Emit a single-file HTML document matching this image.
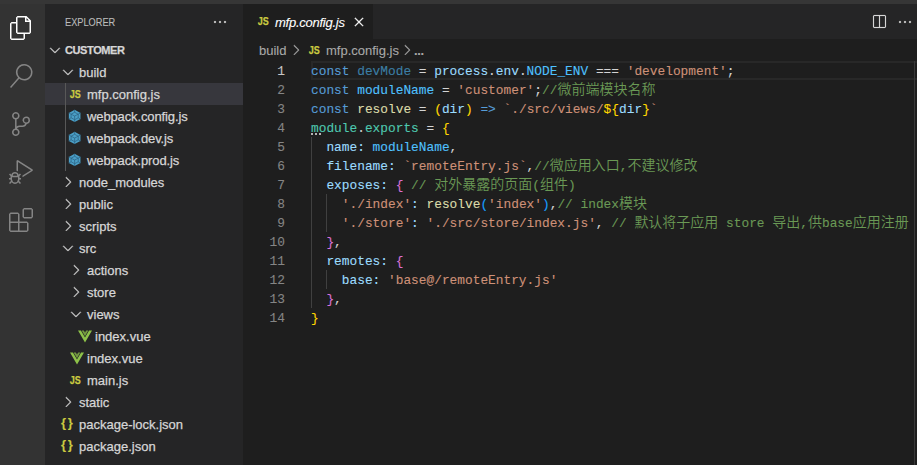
<!DOCTYPE html>
<html lang="en">
<head>
<meta charset="utf-8">
<title>mfp.config.js - customer</title>
<style>
*{box-sizing:border-box;margin:0;padding:0}
html,body{width:917px;height:465px;overflow:hidden;background:#1e1e1e}
body{-webkit-text-stroke-width:0.1px;position:relative;font-family:"Liberation Sans","Noto Sans CJK SC",sans-serif;font-size:13px;color:#cccccc}
.abs{position:absolute}
#topstrip{left:0;top:0;width:917px;height:4px;background:#363636}
#activity{left:0;top:4px;width:45px;height:461px;background:#333333}
#activity svg{position:absolute;left:9px}
#sidebar{left:45px;top:4px;width:198px;height:461px;background:#252526}
#tabs{left:243px;top:4px;width:674px;height:35px;background:#252526}
#tab{left:0;top:0;width:130px;height:35px;background:#1e1e1e}
#editor{left:243px;top:39px;width:674px;height:426px;background:#1e1e1e}
.row{position:absolute;left:0;width:198px;height:22px;line-height:22px;white-space:nowrap}
.row .lbl{position:absolute;top:1px;color:#d6d6d6;-webkit-text-stroke:0.25px #d6d6d6}
.row .hdr{font-weight:bold;font-size:11px;letter-spacing:-0.4px;top:0}
.ic{position:absolute}
.sel{background:#37373d}
.js{position:absolute;top:0;height:22px;line-height:22px;font-weight:bold;font-size:9px;color:#cbcb41;letter-spacing:0;transform-origin:0 50%;transform:scaleY(1.25);-webkit-text-stroke:0.2px #cbcb41;margin-left:-0.3px}
.json{position:absolute;top:-1px;height:22px;line-height:22px;font-weight:bold;font-size:13px;color:#cbcb41;letter-spacing:1.6px}
.guide{position:absolute;width:1px;background:#585858}
.ln{position:absolute;left:0;width:42px;text-align:right;height:19px;line-height:21px;color:#858585;font-family:"Liberation Mono",monospace;font-size:12.83px}
.ln.cur{color:#c6c6c6}
.cl{position:absolute;left:68px;height:19px;line-height:21px;white-space:pre;font-family:"Liberation Mono","Noto Sans CJK SC",monospace;font-size:12.83px;color:#d4d4d4}
.cl i{-webkit-text-stroke-width:0;font-style:normal;font-size:14px;line-height:0;font-weight:350;font-family:"Noto Sans CJK SC","WenQuanYi Zen Hei",sans-serif}
.k{color:#569cd6}.v{color:#9cdcfe}.c{color:#4fc1ff}.s{color:#ce9178}.m{color:#6a9955}.f{color:#dcdcaa}.t{color:#4ec9b0}
.b1{color:#ffd700}.b2{color:#da70d6}.b3{color:#179fff}.u{color:#3c7fa6}
.ig{position:absolute;width:1px;background:#404040}
.bc{position:absolute;top:1px;height:22px;line-height:22px;color:#a9a9a9;white-space:nowrap}
</style>
</head>
<body>
<div id="topstrip" class="abs"></div>
<div id="activity" class="abs">
  <svg style="top:12px" width="24" height="24" viewBox="0 0 24 24"><path fill="#ffffff" d="M17.5 0h-9L7 1.5V6H2.5L1 7.5v15.07L2.5 24h12.07L16 22.57V18h4.7l1.3-1.43V4.5L17.5 0zm0 2.12l2.38 2.38H17.5V2.12zm-3 20.38h-12v-15H7v9.07L8.5 18h6v4.5zm6-6h-12v-15H16V6h4.5v10.5z"/></svg>
  <svg style="top:60px" width="24" height="24" viewBox="0 0 24 24"><path fill="#858585" d="M15.25 0a8.25 8.25 0 0 0-6.18 13.72L1 22.88l1.12 1 8.05-9.12A8.251 8.251 0 1 0 15.25.01V0zm0 15a6.75 6.75 0 1 1 0-13.5 6.75 6.75 0 0 1 0 13.5z"/></svg>
  <svg style="top:108px" width="24" height="24" viewBox="0 0 24 24"><path fill="#858585" d="M21.007 8.222A3.738 3.738 0 0 0 15.045 5.2a3.737 3.737 0 0 0 1.156 6.583 2.988 2.988 0 0 1-2.668 1.67h-2.99a4.456 4.456 0 0 0-2.989 1.165V7.4a3.737 3.737 0 1 0-1.494 0v9.117a3.776 3.776 0 1 0 1.816.099 2.99 2.99 0 0 1 2.668-1.667h2.99a4.484 4.484 0 0 0 4.223-3.039 3.736 3.736 0 0 0 3.25-3.687zM4.565 3.738a2.242 2.242 0 1 1 4.484 0 2.242 2.242 0 0 1-4.484 0zm4.484 16.441a2.242 2.242 0 1 1-4.484 0 2.242 2.242 0 0 1 4.484 0zm8.221-9.715a2.242 2.242 0 1 1 0-4.485 2.242 2.242 0 0 1 0 4.485z"/></svg>
  <svg style="top:156px" width="24" height="24" viewBox="0 0 24 24"><path fill="#858585" d="M10.94 13.5l-1.32 1.32a3.73 3.73 0 0 0-7.24 0L1.06 13.5 0 14.56l1.72 1.72-.22.22V18H0v1.5h1.5v.08c.077.489.214.966.41 1.42L0 22.94 1.06 24l1.65-1.65A4.308 4.308 0 0 0 6 24a4.31 4.31 0 0 0 3.29-1.65L10.94 24 12 22.94 10.09 21c.198-.464.336-.951.41-1.45v-.1H12V18h-1.5v-1.5l-.22-.22L12 14.56l-1.06-1.06zM6 13.5a2.25 2.25 0 0 1 2.25 2.25h-4.5A2.25 2.25 0 0 1 6 13.5zm3 6a3.33 3.33 0 0 1-3 3 3.33 3.33 0 0 1-3-3v-2.250h6v2.250zm14.760-9.900v1.260L13.500 17.370V15.600l8.500-5.370L9 2v9.460a5.070 5.070 0 0 0-1.500-.720V.630L8.640 0l15.120 9.600z"/></svg>
  <svg style="top:204px" width="24" height="24" viewBox="0 0 24 24"><path fill="#858585" d="M13.5 1.5L15 0h7.5L24 1.5V9l-1.5 1.5H15L13.500 9V1.500zm1.500 0V9h7.500V1.500H15zM0 15V6l1.500-1.500H9L10.500 6v7.500H18l1.500 1.500v7.500L18 24H1.500L0 22.500V15zm9-1.500V6H1.500v7.500H9zM9 15H1.500v7.500H9V15zm1.500 7.500H18V15h-7.500v7.500z"/></svg>
</div>
<div id="sidebar" class="abs">
  <div class="abs" style="left:20px;top:1px;height:35px;line-height:35px;font-size:11px;color:#bbbbbb;white-space:nowrap;transform-origin:0 50%;transform:scaleX(0.838)">EXPLORER</div>
  <svg class="ic" style="left:167px;top:10px" width="16" height="16" viewBox="0 0 16 16"><path fill="#dddddd" stroke="#dddddd" stroke-width="0.2" d="M4 8a1 1 0 1 1-2 0 1 1 0 0 1 2 0zm5 0a1 1 0 1 1-2 0 1 1 0 0 1 2 0zm5 0a1 1 0 1 1-2 0 1 1 0 0 1 2 0z"/></svg>
  <div class="row" style="top:35px"><svg class="ic" style="left:2px;top:3px" width="16" height="16" viewBox="0 0 16 16"><path fill="#d0d0d0" stroke="#d0d0d0" stroke-width="0.35" d="M7.976 10.072l4.357-4.357.62.618L8.284 11h-.618L3 6.333l.619-.618 4.357 4.357z"/></svg><span class="lbl hdr" style="left:20px">CUSTOMER</span></div>
  <div class="row" style="top:57px"><svg class="ic" style="left:15px;top:3px" width="16" height="16" viewBox="0 0 16 16"><path fill="#d0d0d0" stroke="#d0d0d0" stroke-width="0.35" d="M7.976 10.072l4.357-4.357.62.618L8.284 11h-.618L3 6.333l.619-.618 4.357 4.357z"/></svg><span class="lbl" style="left:34px">build</span></div>
  <div class="row sel" style="top:79px"><span class="js" style="left:25px">JS</span><span class="lbl" style="left:42px">mfp.config.js</span></div>
  <div class="row" style="top:101px"><svg class="ic" style="left:23px;top:4px" width="14" height="14" viewBox="0 0 14 14"><path fill="#4b9fc6" d="M6.65 0.85L12.45 3.9v6.1L6.65 12.95 0.85 10V3.9z"/><path fill="none" stroke="#2a5f80" stroke-width="0.7" d="M6.65 3.3L10.2 5.2v3.6L6.65 10.7 3.1 8.8V5.2zM6.65 7v3.7M6.65 7L3.1 5.2M6.65 7L10.2 5.2M6.65 0.7v2.6M6.65 13.1v-2.4M0.7 3.85L3.1 5.2M12.6 3.85L10.2 5.2M0.7 10.05L3.1 8.8M12.6 10.05L10.2 8.8"/></svg><span class="lbl" style="left:42px;letter-spacing:-0.12px">webpack.config.js</span></div>
  <div class="row" style="top:123px"><svg class="ic" style="left:23px;top:4px" width="14" height="14" viewBox="0 0 14 14"><path fill="#4b9fc6" d="M6.65 0.85L12.45 3.9v6.1L6.65 12.95 0.85 10V3.9z"/><path fill="none" stroke="#2a5f80" stroke-width="0.7" d="M6.65 3.3L10.2 5.2v3.6L6.65 10.7 3.1 8.8V5.2zM6.65 7v3.7M6.65 7L3.1 5.2M6.65 7L10.2 5.2M6.65 0.7v2.6M6.65 13.1v-2.4M0.7 3.85L3.1 5.2M12.6 3.85L10.2 5.2M0.7 10.05L3.1 8.8M12.6 10.05L10.2 8.8"/></svg><span class="lbl" style="left:42px;letter-spacing:-0.12px">webpack.dev.js</span></div>
  <div class="row" style="top:145px"><svg class="ic" style="left:23px;top:4px" width="14" height="14" viewBox="0 0 14 14"><path fill="#4b9fc6" d="M6.65 0.85L12.45 3.9v6.1L6.65 12.95 0.85 10V3.9z"/><path fill="none" stroke="#2a5f80" stroke-width="0.7" d="M6.65 3.3L10.2 5.2v3.6L6.65 10.7 3.1 8.8V5.2zM6.65 7v3.7M6.65 7L3.1 5.2M6.65 7L10.2 5.2M6.65 0.7v2.6M6.65 13.1v-2.4M0.7 3.85L3.1 5.2M12.6 3.85L10.2 5.2M0.7 10.05L3.1 8.8M12.6 10.05L10.2 8.8"/></svg><span class="lbl" style="left:42px;letter-spacing:-0.12px">webpack.prod.js</span></div>
  <div class="row" style="top:167px"><svg class="ic" style="left:15px;top:3px" width="16" height="16" viewBox="0 0 16 16"><path fill="#d0d0d0" stroke="#d0d0d0" stroke-width="0.35" d="M10.072 8.024L5.715 3.667l.618-.62L11 7.716v.618L6.333 13l-.618-.619 4.357-4.357z"/></svg><span class="lbl" style="left:34px">node_modules</span></div>
  <div class="row" style="top:189px"><svg class="ic" style="left:15px;top:3px" width="16" height="16" viewBox="0 0 16 16"><path fill="#d0d0d0" stroke="#d0d0d0" stroke-width="0.35" d="M10.072 8.024L5.715 3.667l.618-.62L11 7.716v.618L6.333 13l-.618-.619 4.357-4.357z"/></svg><span class="lbl" style="left:34px">public</span></div>
  <div class="row" style="top:211px"><svg class="ic" style="left:15px;top:3px" width="16" height="16" viewBox="0 0 16 16"><path fill="#d0d0d0" stroke="#d0d0d0" stroke-width="0.35" d="M10.072 8.024L5.715 3.667l.618-.62L11 7.716v.618L6.333 13l-.618-.619 4.357-4.357z"/></svg><span class="lbl" style="left:34px">scripts</span></div>
  <div class="row" style="top:233px"><svg class="ic" style="left:15px;top:3px" width="16" height="16" viewBox="0 0 16 16"><path fill="#d0d0d0" stroke="#d0d0d0" stroke-width="0.35" d="M7.976 10.072l4.357-4.357.62.618L8.284 11h-.618L3 6.333l.619-.618 4.357 4.357z"/></svg><span class="lbl" style="left:34px">src</span></div>
  <div class="row" style="top:255px"><svg class="ic" style="left:23px;top:3px" width="16" height="16" viewBox="0 0 16 16"><path fill="#d0d0d0" stroke="#d0d0d0" stroke-width="0.35" d="M10.072 8.024L5.715 3.667l.618-.62L11 7.716v.618L6.333 13l-.618-.619 4.357-4.357z"/></svg><span class="lbl" style="left:42px">actions</span></div>
  <div class="row" style="top:277px"><svg class="ic" style="left:23px;top:3px" width="16" height="16" viewBox="0 0 16 16"><path fill="#d0d0d0" stroke="#d0d0d0" stroke-width="0.35" d="M10.072 8.024L5.715 3.667l.618-.62L11 7.716v.618L6.333 13l-.618-.619 4.357-4.357z"/></svg><span class="lbl" style="left:42px">store</span></div>
  <div class="row" style="top:299px"><svg class="ic" style="left:23px;top:3px" width="16" height="16" viewBox="0 0 16 16"><path fill="#d0d0d0" stroke="#d0d0d0" stroke-width="0.35" d="M7.976 10.072l4.357-4.357.62.618L8.284 11h-.618L3 6.333l.619-.618 4.357 4.357z"/></svg><span class="lbl" style="left:42px">views</span></div>
  <div class="row" style="top:321px"><svg class="ic" style="left:33px;top:4.5px" width="14" height="13" viewBox="0 0 14 13"><path fill="#8dc149" d="M0 0.5h2.9L7 7.6 11.1 0.5H14L7 12.6z"/><path fill="#8dc149" d="M3.7 0.5h2.1L7 2.6 8.2 0.5h2.1L7 6.2z" opacity="0.75"/></svg><span class="lbl" style="left:50px">index.vue</span></div>
  <div class="row" style="top:343px"><svg class="ic" style="left:25px;top:4.5px" width="14" height="13" viewBox="0 0 14 13"><path fill="#8dc149" d="M0 0.5h2.9L7 7.6 11.1 0.5H14L7 12.6z"/><path fill="#8dc149" d="M3.7 0.5h2.1L7 2.6 8.2 0.5h2.1L7 6.2z" opacity="0.75"/></svg><span class="lbl" style="left:42px">index.vue</span></div>
  <div class="row" style="top:365px"><span class="js" style="left:25px">JS</span><span class="lbl" style="left:42px">main.js</span></div>
  <div class="row" style="top:387px"><svg class="ic" style="left:15px;top:3px" width="16" height="16" viewBox="0 0 16 16"><path fill="#d0d0d0" stroke="#d0d0d0" stroke-width="0.35" d="M10.072 8.024L5.715 3.667l.618-.62L11 7.716v.618L6.333 13l-.618-.619 4.357-4.357z"/></svg><span class="lbl" style="left:34px">static</span></div>
  <div class="row" style="top:409px"><span class="json" style="left:16px">{}</span><span class="lbl" style="left:34px">package-lock.json</span></div>
  <div class="row" style="top:431px"><span class="json" style="left:16px">{}</span><span class="lbl" style="left:34px">package.json</span></div>
  <div class="guide" style="left:20px;top:79px;height:88px"></div>
</div>
<div id="tabs" class="abs">
  <div id="tab" class="abs">
    <span class="js" style="left:15px;top:0;height:35px;line-height:34px">JS</span>
    <span class="abs" style="left:32px;top:1px;line-height:35px;color:#ffffff;font-style:italic;white-space:nowrap;letter-spacing:-0.25px">mfp.config.js</span>
    <svg class="ic" style="left:107.7px;top:10px" width="16" height="16" viewBox="0 0 16 16"><path fill="#ffffff" stroke="#ffffff" stroke-width="0.3" d="M8 8.707l3.646 3.647.708-.707L8.707 8l3.647-3.646-.707-.708L8 7.293 4.354 3.646l-.707.708L7.293 8l-3.646 3.646.707.708L8 8.707z"/></svg>
  </div>
  <svg class="ic" style="left:628px;top:10px" width="16" height="16" viewBox="0 0 16 16"><path fill="#d8d8d8" stroke="#d8d8d8" stroke-width="0.15" d="M14 1H3L2 2v11l1 1h11l1-1V2l-1-1zM8 13H3V2h5v11zm6 0H9V2h5v11z"/></svg>
  <svg class="ic" style="left:654px;top:10px" width="16" height="16" viewBox="0 0 16 16"><path fill="#dddddd" stroke="#dddddd" stroke-width="0.2" d="M4 8a1 1 0 1 1-2 0 1 1 0 0 1 2 0zm5 0a1 1 0 1 1-2 0 1 1 0 0 1 2 0zm5 0a1 1 0 1 1-2 0 1 1 0 0 1 2 0z"/></svg>
</div>
<div id="editor" class="abs">
  <div class="bc" style="left:16px">build</div>
  <svg class="ic" style="left:45px;top:3px" width="16" height="16" viewBox="0 0 16 16"><path fill="#a9a9a9" stroke="#a9a9a9" stroke-width="0.3" d="M10.072 8.024L5.715 3.667l.618-.62L11 7.716v.618L6.333 13l-.618-.619 4.357-4.357z"/></svg>
  <span class="js" style="left:66px">JS</span>
  <div class="bc" style="left:83px">mfp.config.js</div>
  <svg class="ic" style="left:156px;top:3px" width="16" height="16" viewBox="0 0 16 16"><path fill="#a9a9a9" stroke="#a9a9a9" stroke-width="0.3" d="M10.072 8.024L5.715 3.667l.618-.62L11 7.716v.618L6.333 13l-.618-.619 4.357-4.357z"/></svg>
  <div class="bc" style="left:171px;font-weight:bold;letter-spacing:-0.4px">...</div>
  <div id="code" class="abs" style="left:0;top:22px;width:674px;height:404px">
    <div class="abs" style="left:68px;top:0;width:606px;height:19px;border:2px solid #282828;border-right:0"></div>
    <div class="abs" style="left:68px;top:72px;width:10px;height:2px;background:repeating-linear-gradient(90deg,#b4b4b4 0,#b4b4b4 2px,transparent 2px,transparent 4px)"></div>
    <div class="abs" style="left:671px;top:0;width:1px;height:404px;background:#393939"></div>
    <div class="ig" style="left:68px;top:76px;height:171px"></div>
    <div class="ig" style="left:83px;top:133px;height:38px"></div>
    <div class="ig" style="left:83px;top:209px;height:19px"></div>
    <div class="ln cur" style="top:0px">1</div>
    <div class="ln" style="top:19px">2</div>
    <div class="ln" style="top:38px">3</div>
    <div class="ln" style="top:57px">4</div>
    <div class="ln" style="top:76px">5</div>
    <div class="ln" style="top:95px">6</div>
    <div class="ln" style="top:114px">7</div>
    <div class="ln" style="top:133px">8</div>
    <div class="ln" style="top:152px">9</div>
    <div class="ln" style="top:171px">10</div>
    <div class="ln" style="top:190px">11</div>
    <div class="ln" style="top:209px">12</div>
    <div class="ln" style="top:228px">13</div>
    <div class="ln" style="top:247px">14</div>
    <div class="cl" style="top:0px"><span class="k">const</span> <span class="u">devMode</span> = <span class="v">process</span>.<span class="v">env</span>.<span class="c">NODE_ENV</span> === <span class="s">'development'</span>;</div>
    <div class="cl" style="top:19px"><span class="k">const</span> <span class="c">moduleName</span> = <span class="s">'customer'</span>;<span class="m">//<i>微前端模块名称</i></span></div>
    <div class="cl" style="top:38px"><span class="k">const</span> <span class="f">resolve</span> = <span class="b1">(</span><span class="v">dir</span><span class="b1">)</span> <span class="k">=&gt;</span> <span class="s">`./src/views/</span><span class="b1">${</span><span class="v">dir</span><span class="b1">}</span><span class="s">`</span></div>
    <div class="cl" style="top:57px"><span class="t">module</span>.<span class="t">exports</span> = <span class="b1">{</span></div>
    <div class="cl" style="top:76px">  <span class="v">name:</span> <span class="c">moduleName</span>,</div>
    <div class="cl" style="top:95px">  <span class="v">filename:</span> <span class="s">`remoteEntry.js`</span>,<span class="m">//<i>微应用入口</i>,<i>不建议修改</i></span></div>
    <div class="cl" style="top:114px">  <span class="v">exposes:</span> <span class="b2">{</span> <span class="m">// <i>对外暴露的页面</i>(<i>组件</i>)</span></div>
    <div class="cl" style="top:133px">    <span class="s">'./index'</span><span class="v">:</span> <span class="f">resolve</span><span class="b3">(</span><span class="s">'index'</span><span class="b3">)</span>,<span class="m">// index<i>模块</i></span></div>
    <div class="cl" style="top:152px">    <span class="s">'./store'</span><span class="v">:</span> <span class="s">'./src/store/index.js'</span>, <span class="m">// <i>默认将子应用</i> store <i>导出</i>,<i>供</i>base<i>应用注册</i></span></div>
    <div class="cl" style="top:171px">  <span class="b2">}</span>,</div>
    <div class="cl" style="top:190px">  <span class="v">remotes:</span> <span class="b2">{</span></div>
    <div class="cl" style="top:209px">    <span class="v">base:</span> <span class="s">'base@/remoteEntry.js'</span></div>
    <div class="cl" style="top:228px">  <span class="b2">}</span>,</div>
    <div class="cl" style="top:247px"><span class="b1">}</span></div>
  </div>
</div>
</body>
</html>
